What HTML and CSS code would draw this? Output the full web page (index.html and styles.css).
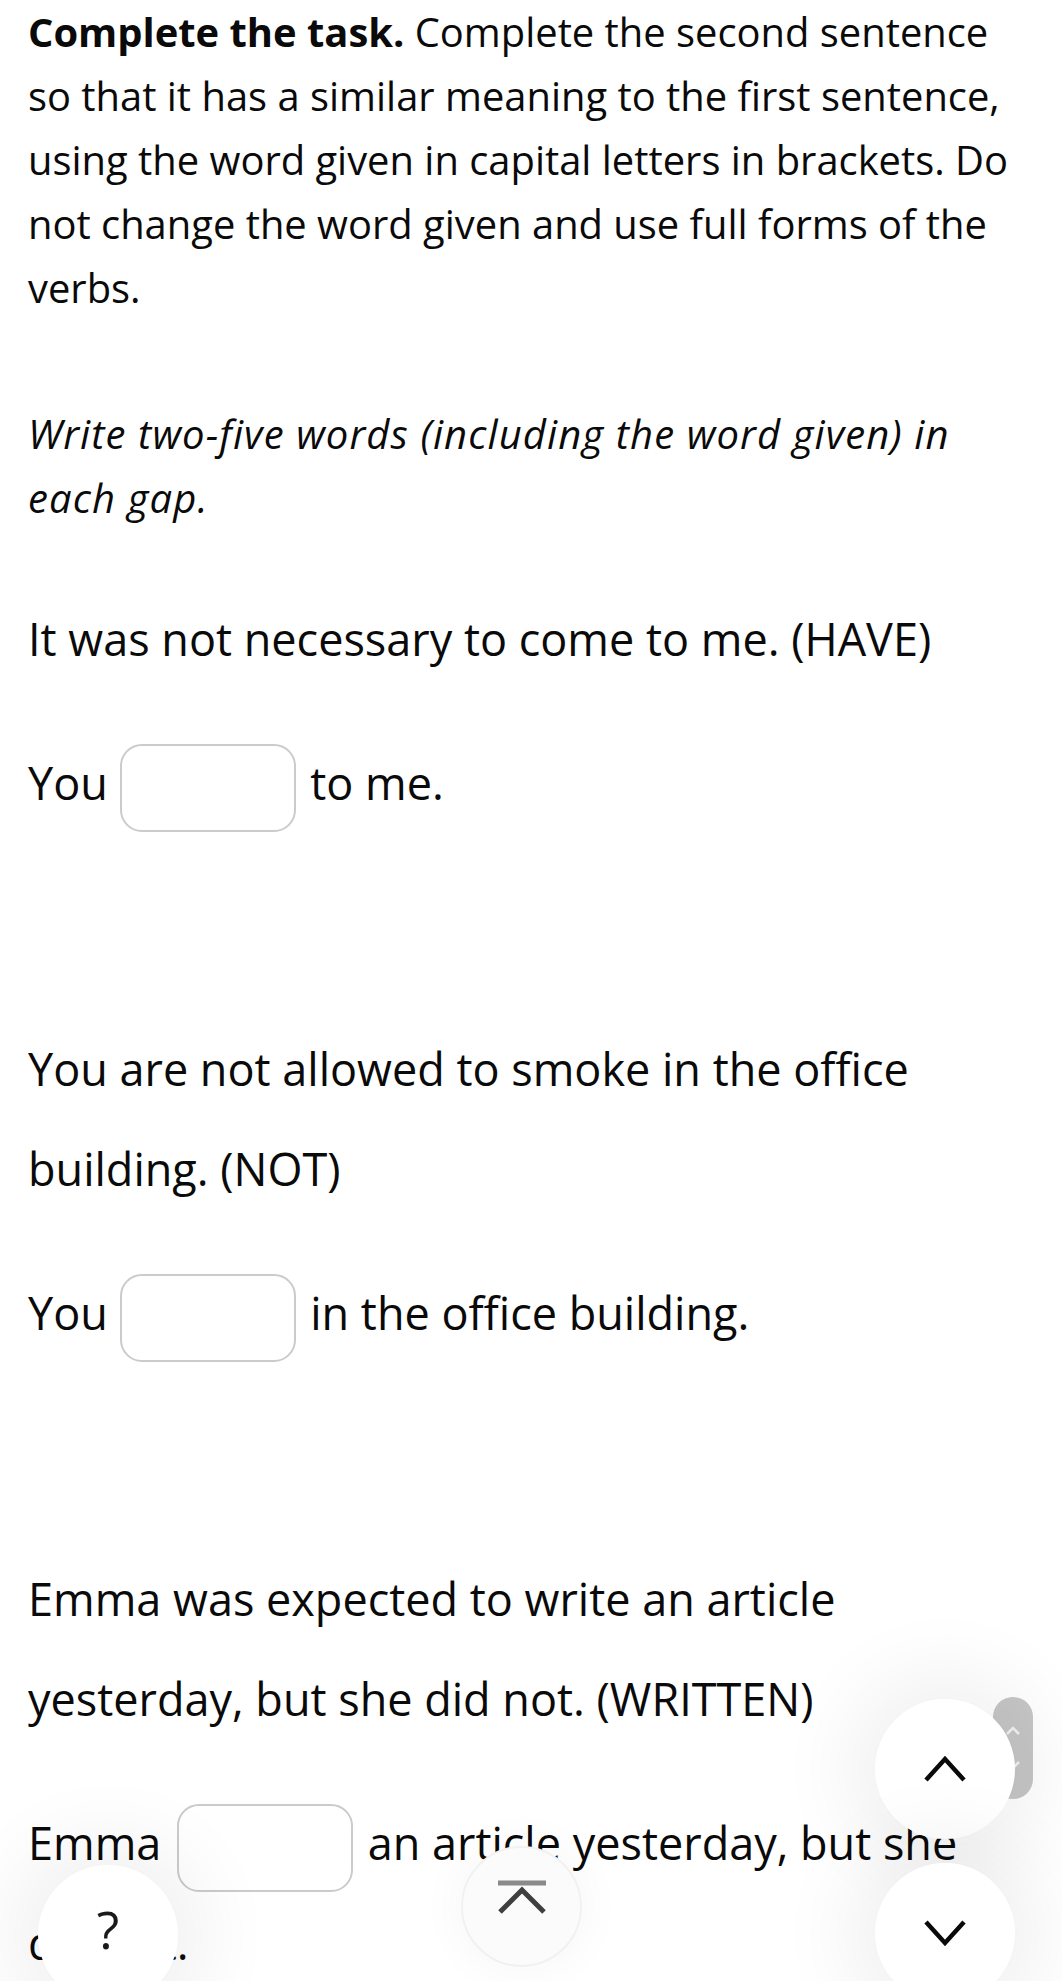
FILE: index.html
```
<!DOCTYPE html>
<html lang="en">
<head>
<meta charset="utf-8">
<title>Complete the task</title>
<link rel="stylesheet" href="styles.css">
</head>
<body>
<main class="task">
  <p class="intro"><strong>Complete the task.</strong> Complete the second sentence so that it has a similar meaning to the first sentence, using the word given in capital letters in brackets. Do not change the word given and use full forms of the verbs.</p>
  <p class="note">Write two-five words (including the word given) in each gap.</p>

  <section class="question">
    <p class="sentence">It was not necessary to come to me. (HAVE)</p>
    <p class="answer">You <input class="gap" type="text" aria-label="Answer 1"> to me.</p>
  </section>

  <section class="question">
    <p class="sentence">You are not allowed to smoke in the office building. (NOT)</p>
    <p class="answer">You <input class="gap" type="text" aria-label="Answer 2"> in the office building.</p>
  </section>

  <section class="question">
    <p class="sentence">Emma was expected to write an article yesterday, but she did not. (WRITTEN)</p>
    <p class="answer">Emma <input class="gap gap-wide" type="text" aria-label="Answer 3"> an article yesterday, but she did not.</p>
  </section>
</main>

<div class="scroll-pill" aria-hidden="true">
  <svg width="16" height="46" viewBox="0 0 16 46"><path d="M2 9 L8 3 L14 9" /><path d="M2 37 L8 43 L14 37" /></svg>
</div>
<button class="fab fab-up" aria-label="Previous">
  <svg width="44" height="28" viewBox="0 0 44 28"><path d="M3 25 L22 4 L41 25" /></svg>
</button>
<button class="fab fab-down" aria-label="Next">
  <svg width="44" height="28" viewBox="0 0 44 28"><path d="M3 3 L22 24 L41 3" /></svg>
</button>
<button class="fab fab-top" aria-label="Back to top">
  <svg width="56" height="40" viewBox="0 0 56 40"><path class="bar" d="M4 3 H52" /><path class="chev" d="M6 32 L28 10 L50 32" /></svg>
</button>
<button class="fab fab-help" aria-label="Help">?</button>
</body>
</html>
```
FILE: styles.css
```
html, body {
  margin: 0;
  padding: 0;
  overflow: hidden;
  background: #ffffff;
}

body {
  font-family: "Open Sans", "Noto Sans", Arial, sans-serif;
  color: #0a0a0a;
}

.task {
  padding: 0 39px 0 28px;
}

.task p {
  margin: 0;
}

.intro {
  font-size: 39.9px;
  line-height: 64px;
}

.intro strong {
  font-weight: 700;
}

.note {
  margin-top: 82px !important;
  font-size: 40px;
  line-height: 64px;
  font-style: italic;
  letter-spacing: 1.1px;
}

.question {
  margin-top: 186px;
}

.note + .question {
  margin-top: 59px;
}

.sentence,
.answer {
  font-size: 45px;
  line-height: 100px;
}

.answer {
  margin-top: 44px !important;
}

.gap {
  box-sizing: border-box;
  width: 176px;
  height: 88px;
  margin: 0 3px 0 0;
  padding: 0 12px;
  border: 2px solid #cbcbcb;
  border-radius: 22px;
  background: #ffffff;
  vertical-align: middle;
  font: inherit;
  outline: none;
}

.gap-wide {
  margin-left: 4px;
}

/* floating controls */
.fab {
  position: fixed;
  box-sizing: border-box;
  display: flex;
  align-items: center;
  justify-content: center;
  border: none;
  border-radius: 50%;
  background: #ffffff;
  padding: 0;
  margin: 0;
  box-shadow: 0 0 80px 28px rgba(0, 0, 0, 0.06);
}

.fab svg path {
  fill: none;
  stroke-linecap: butt;
  stroke-linejoin: miter;
}

.fab-up,
.fab-down {
  left: 875px;
  width: 140px;
  height: 140px;
}

.fab-up {
  top: 1699px;
}

.fab-down {
  top: 1863px;
}

.fab-up svg path,
.fab-down svg path {
  stroke: #0a0a0a;
  stroke-width: 4.5;
}

.fab-top {
  left: 461px;
  top: 1846px;
  width: 121px;
  height: 121px;
  background: #fbfbfb;
  border: 2px solid #f1f1f1;
  box-shadow: 0 0 40px 8px rgba(0, 0, 0, 0.03);
  padding-bottom: 14px;
}

.fab-top .bar {
  stroke: #8a8a8a;
  stroke-width: 5;
}

.fab-top .chev {
  stroke: #3f3f3f;
  stroke-width: 5;
}

.fab-help {
  left: 38px;
  top: 1865px;
  width: 140px;
  height: 140px;
  font-family: "Open Sans", "Noto Sans", Arial, sans-serif;
  font-size: 52px;
  line-height: 1;
  color: #1a1a1a;
  padding-bottom: 12px;
}

.scroll-pill {
  position: fixed;
  left: 993px;
  top: 1697px;
  width: 40px;
  height: 102px;
  border-radius: 20px;
  background: #c6c6c6;
  display: flex;
  align-items: center;
  justify-content: center;
}

.scroll-pill svg path {
  fill: none;
  stroke: #f2f2f2;
  stroke-width: 2.5;
}
```
